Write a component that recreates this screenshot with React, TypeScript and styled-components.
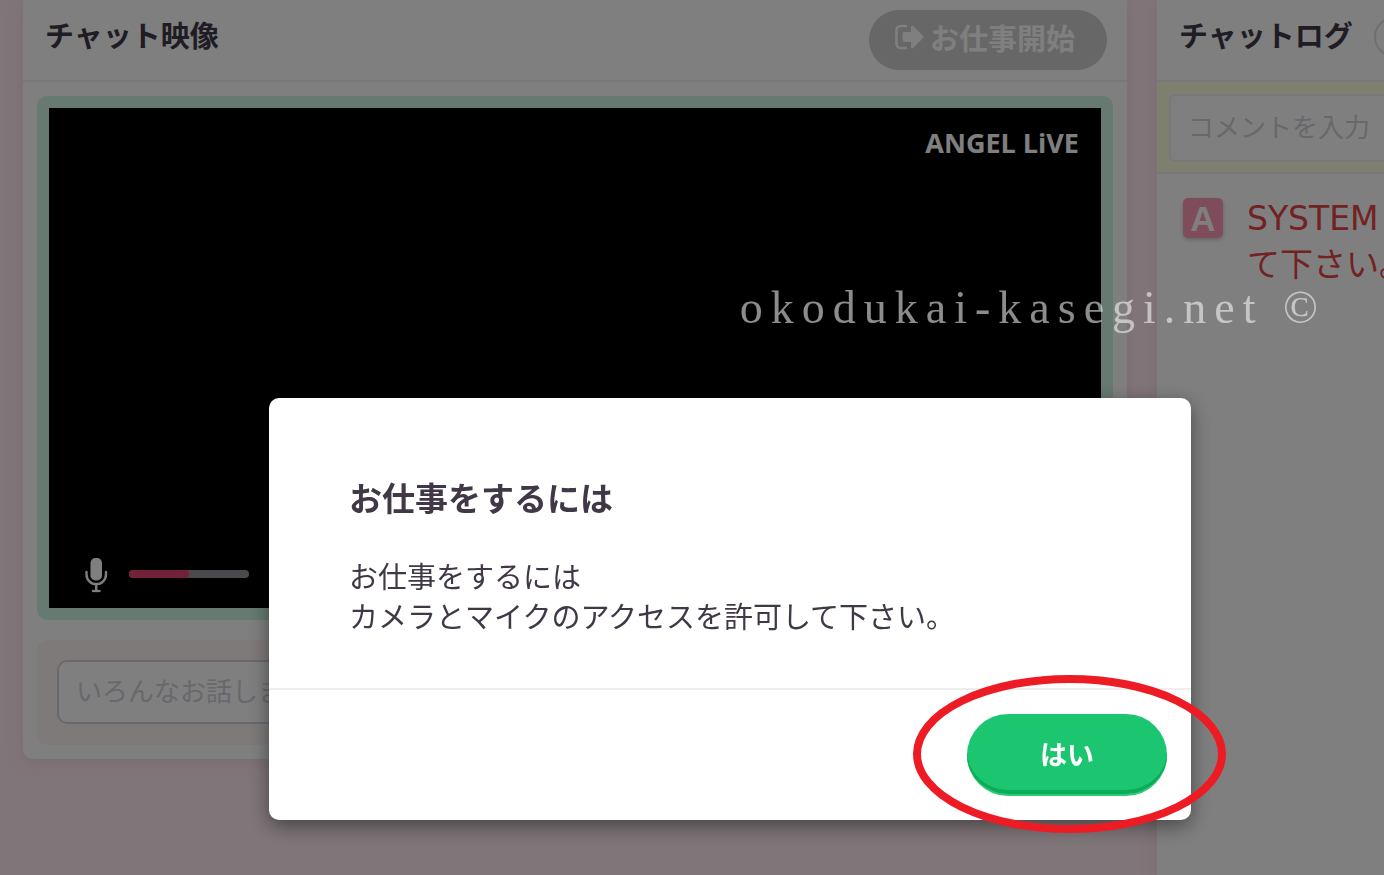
import React from 'react';
import styled, { createGlobalStyle } from 'styled-components';

const GlobalStyle = createGlobalStyle`
  * { box-sizing: border-box; }
  body {
    margin: 0;
    background: #ffecf2;
    color: #403846;
    font-family: "Noto Sans CJK JP", "Noto Sans", sans-serif;
    overflow: hidden;
  }
  h1, h2, p { margin: 0; }
  button, input { font: inherit; }
`;

const Page = styled.main`
  position: relative;
  display: flex;
  align-items: flex-start;
  gap: 30px;
  min-height: 100vh;
  padding-left: 23px;
  overflow: hidden;
`;

const Panel = styled.section`
  background: #fff;
  box-shadow: 0 4px 16px rgba(220, 150, 180, 0.25);
`;

const VideoPanel = styled(Panel)`
  flex: 1;
  min-width: 0;
  border-radius: 2px 2px 10px 10px;
`;

const LogPanel = styled(Panel)`
  flex: 0 0 227px;
  min-height: 100vh;
  overflow: hidden;
`;

const LogContent = styled.div`
  min-width: 480px;
`;

const PanelHeader = styled.header<{ $spread?: boolean }>`
  display: flex;
  align-items: center;
  justify-content: ${(p) => (p.$spread ? 'space-between' : 'flex-start')};
  gap: 21px;
  height: 82px;
  padding: 0 20px 0 22px;
  border-bottom: 2px solid #f0eef2;
`;

const PanelTitle = styled.h1`
  padding-bottom: 12px;
  font-size: 29px;
  line-height: 40px;
  font-weight: 700;
  white-space: nowrap;
`;

const StartButton = styled.button`
  display: flex;
  align-items: center;
  justify-content: center;
  gap: 6px;
  width: 238px;
  height: 60px;
  padding: 0 6px 6px 0;
  border: 0;
  border-radius: 30px;
  background: #cecece;
  color: #fff;
  font-size: 29px;
  line-height: 40px;
  font-weight: 700;
`;

const RoundButton = styled.button`
  width: 40px;
  height: 40px;
  margin-bottom: 6px;
  padding: 0;
  border: 2px solid #dedce2;
  border-radius: 50%;
  background: #fff;
`;

const PanelBody = styled.div`
  display: flex;
  flex-direction: column;
  gap: 20px;
  padding: 14px;
`;

const VideoFrame = styled.div`
  padding: 12px;
  border-radius: 10px;
  background: #ccf4e2;
`;

const Video = styled.div`
  display: flex;
  flex-direction: column;
  justify-content: space-between;
  min-height: 500px;
  padding: 15px 22px 15px 34px;
  background: #000;
`;

const Brand = styled.p`
  align-self: flex-end;
  color: #fff;
  font-family: "Open Sans", sans-serif;
  font-size: 27px;
  line-height: 40px;
  font-weight: 700;
`;

const MicRow = styled.div`
  display: flex;
  align-items: center;
  gap: 20px;
`;

const Meter = styled.div`
  width: 120px;
  height: 8px;
  margin-bottom: 2px;
  border-radius: 4px;
  background: #96929a;
`;

const MeterLevel = styled.div`
  width: 50%;
  height: 100%;
  border-radius: 4px;
  background: #e44470;
`;

const TalkBox = styled.div`
  padding: 20px 20px 21px;
  border-radius: 10px;
  background: #fff5f5;
`;

const TextField = styled.input<{ $tall?: boolean }>`
  display: block;
  width: 100%;
  height: ${(p) => (p.$tall ? 68 : 64)}px;
  padding: 0 17px 6px;
  border: 2px solid ${(p) => (p.$tall ? '#f0eef4' : '#d4d1da')};
  border-radius: ${(p) => (p.$tall ? 6 : 10)}px;
  background: #fff;
  font-size: 26px;
  &::placeholder { color: #d2ced8; opacity: 1; }
`;

const CommentBar = styled.div`
  padding: 12px 12px 10px;
  border-bottom: 2px solid #f0eef2;
  background: #ffffe0;
`;

const LogEntry = styled.div`
  display: flex;
  gap: 24px;
  padding: 24px 26px;
`;

const Avatar = styled.span`
  flex: none;
  width: 40px;
  height: 40px;
  border-radius: 5px;
  background: #ff98b6;
  box-shadow: 0 2px 4px rgba(0, 0, 0, 0.2);
  color: #fff;
  font-family: "Liberation Sans", sans-serif;
  font-size: 35px;
  line-height: 42px;
  font-weight: 700;
  text-align: center;
`;

const LogText = styled.p`
  margin-top: -2px;
  color: #e44444;
  font-family: "DejaVu Sans", "Noto Sans CJK JP", sans-serif;
  font-size: 33px;
  line-height: 46px;
  white-space: nowrap;
`;

const Overlay = styled.div`
  position: fixed;
  inset: 0;
  display: flex;
  align-items: flex-start;
  padding: 398px 193px 0 269px;
  background: rgba(0, 0, 0, 0.5);
`;

const Watermark = styled.p`
  position: absolute;
  top: 280px;
  right: 58px;
  color: rgba(255, 255, 255, 0.55);
  font-family: "Liberation Serif", serif;
  font-size: 46px;
  line-height: 56px;
  letter-spacing: 8px;
  white-space: nowrap;
`;

const Dialog = styled.section`
  flex: 1;
  border-radius: 10px;
  background: #fff;
  box-shadow: 0 6px 20px rgba(0, 0, 0, 0.45);
`;

const DialogBody = styled.div`
  display: flex;
  flex-direction: column;
  gap: 33px;
  padding: 74px 80px 53px;
`;

const DialogTitle = styled.h2`
  font-size: 33px;
  line-height: 50px;
  font-weight: 700;
`;

const DialogText = styled.p`
  font-size: 29px;
  line-height: 40px;
`;

const DialogFooter = styled.footer`
  display: flex;
  justify-content: flex-end;
  padding: 24px;
  border-top: 2px solid #eeeeee;
`;

const ButtonSpot = styled.div`
  position: relative;
  display: flex;
`;

const YesButton = styled.button`
  width: 200px;
  height: 82px;
  padding: 0;
  border: 0;
  border-bottom: 2px solid #2cca78;
  border-radius: 41px;
  background: #1cc671;
  box-shadow: inset 0 -4px 0 #0cab58;
  color: #fff;
  font-size: 27px;
  line-height: 40px;
  font-weight: 700;
`;

const RedRing = styled.svg`
  position: absolute;
  top: -40px;
  left: -55px;
  pointer-events: none;
`;

const ExitIcon = () => (
  <svg width="29" height="26" viewBox="0 0 29 26" aria-hidden="true">
    <path d="M12 2H5.500A4 4 0 0 0 1.500 6v14a4 4 0 0 0 4 4H12" fill="none" stroke="#fff" strokeWidth="2.600" />
    <path d="M7.500 9.500A1.500 1.500 0 0 1 9 8h7V3.200c0-1.600 1.500-2 2.500-1l9.500 9.800c.7.700.7 1.400 0 2.100L18.500 23.800c-1 1-2.500.6-2.500-1V18H9a1.500 1.500 0 0 1-1.500-1.500z" fill="#fff" />
  </svg>
);

const MicIcon = () => (
  <svg width="26" height="36" viewBox="0 0 26 36" aria-hidden="true">
    <rect x="7.500" y="1" width="11.500" height="22.500" rx="5" fill="#fff" />
    <path d="M3.500 15v2.500a9.750 9.750 0 0 0 19.500 0V15M13.250 27v7" fill="none" stroke="#fff" strokeWidth="2.400" strokeLinecap="round" />
    <path d="M9 34h8.500" stroke="#fff" strokeWidth="2.200" />
  </svg>
);

export default function App() {
  return (
    <>
      <GlobalStyle />
      <Page>
        <VideoPanel>
          <PanelHeader $spread>
            <PanelTitle>チャット映像</PanelTitle>
            <StartButton type="button">
              <ExitIcon />
              お仕事開始
            </StartButton>
          </PanelHeader>
          <PanelBody>
            <VideoFrame>
              <Video>
                <Brand>ANGEL LiVE</Brand>
                <MicRow>
                  <MicIcon />
                  <Meter role="meter" aria-label="マイク" aria-valuenow={50} aria-valuemin={0} aria-valuemax={100}>
                    <MeterLevel />
                  </Meter>
                </MicRow>
              </Video>
            </VideoFrame>
            <TalkBox>
              <TextField type="text" aria-label="メッセージ" placeholder="いろんなお話しましょう" />
            </TalkBox>
          </PanelBody>
        </VideoPanel>
        <LogPanel>
          <LogContent>
            <PanelHeader>
              <PanelTitle>チャットログ</PanelTitle>
              <RoundButton type="button" aria-label="設定" />
            </PanelHeader>
            <CommentBar>
              <TextField $tall type="text" aria-label="コメント" placeholder="コメントを入力" />
            </CommentBar>
            <LogEntry>
              <Avatar>A</Avatar>
              <LogText>
                SYSTEM
                <br />
                て下さい。
              </LogText>
            </LogEntry>
          </LogContent>
        </LogPanel>
      </Page>
      <Overlay>
        <Watermark>okodukai-kasegi.net ©</Watermark>
        <Dialog role="dialog" aria-labelledby="dialog-title">
          <DialogBody>
            <DialogTitle id="dialog-title">お仕事をするには</DialogTitle>
            <DialogText>
              お仕事をするには
              <br />
              カメラとマイクのアクセスを許可して下さい。
            </DialogText>
          </DialogBody>
          <DialogFooter>
            <ButtonSpot>
              <YesButton type="button">はい</YesButton>
              <RedRing width="316" height="160" viewBox="0 0 316 160" aria-hidden="true">
                <ellipse cx="157.500" cy="80" rx="152.500" ry="75" fill="none" stroke="#ed1c24" strokeWidth="8" />
              </RedRing>
            </ButtonSpot>
          </DialogFooter>
        </Dialog>
      </Overlay>
    </>
  );
}
